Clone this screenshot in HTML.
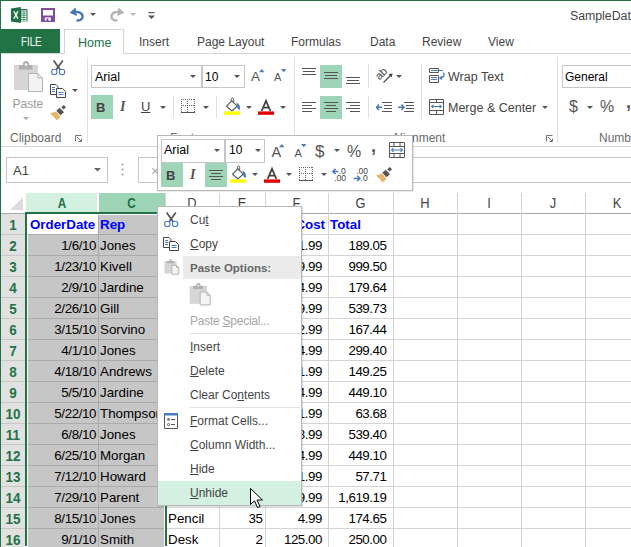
<!DOCTYPE html><html><head><meta charset="utf-8"><style>
*{margin:0;padding:0;box-sizing:border-box}
html,body{width:631px;height:547px;overflow:hidden;background:#fff;font-family:"Liberation Sans", sans-serif;position:relative}
.a{position:absolute}
.t{position:absolute;white-space:nowrap;line-height:1}
.cell{position:absolute;white-space:nowrap;font-size:13.33px;line-height:21px;height:21px;color:#000;overflow:visible}
.r{text-align:right}
.mi{position:absolute;left:190px;font-size:12px;color:#505050;white-space:nowrap;line-height:1}
.u{text-decoration:underline;text-underline-offset:1px}
</style></head><body>
<div class="a" style="left:0;top:0;width:631px;height:1px;background:#217346"></div>
<div class="a" style="left:0;top:0;width:1px;height:547px;background:#217346"></div>
<svg class="a" style="left:11px;top:7px" width="17" height="16" viewBox="0 0 17 16">
<rect x="9" y="2" width="7.5" height="12.5" fill="#217346"/>
<rect x="10.3" y="3.20" width="2.3" height="1.35" fill="#fff"/><rect x="13.3" y="3.20" width="2.3" height="1.35" fill="#fff"/><rect x="10.3" y="5.15" width="2.3" height="1.35" fill="#fff"/><rect x="13.3" y="5.15" width="2.3" height="1.35" fill="#fff"/><rect x="10.3" y="7.10" width="2.3" height="1.35" fill="#fff"/><rect x="13.3" y="7.10" width="2.3" height="1.35" fill="#fff"/><rect x="10.3" y="9.05" width="2.3" height="1.35" fill="#fff"/><rect x="13.3" y="9.05" width="2.3" height="1.35" fill="#fff"/><rect x="10.3" y="11.00" width="2.3" height="1.35" fill="#fff"/><rect x="13.3" y="11.00" width="2.3" height="1.35" fill="#fff"/><rect x="10.3" y="12.95" width="2.3" height="1.35" fill="#fff"/><rect x="13.3" y="12.95" width="2.3" height="1.35" fill="#fff"/>
<path d="M0 1.6 L9.8 0 V16 L0 14.4Z" fill="#1e7145"/>
<path d="M2.2 4.3 L4.1 8 L2.2 11.7 H3.7 L4.9 9.3 L6.1 11.7 H7.6 L5.7 8 L7.6 4.3 H6.1 L4.9 6.7 L3.7 4.3Z" fill="#fff"/>
</svg>
<svg class="a" style="left:41px;top:8px" width="14" height="14" viewBox="0 0 14 14">
<path d="M0 0H14V14H0Z" fill="#7e4ea0"/>
<rect x="2" y="2" width="10" height="5.5" fill="#fff"/>
<rect x="3.8" y="9.5" width="6" height="3.2" fill="#fff"/>
<rect x="5.4" y="10.5" width="2" height="3.5" fill="#7e4ea0"/>
</svg>
<svg class="a" style="left:69px;top:6px" width="16" height="16" viewBox="0 0 16 16">
<path d="M5 6.5C9 4.8 13.5 7 13.6 10.5C13.6 13.5 10.5 15 7.5 14.2" fill="none" stroke="#4478b8" stroke-width="2.4"/>
<path d="M0.6 6.8L6.6 1.6L7.8 10Z" fill="#4478b8"/>
</svg>
<svg class="a" style="left:90px;top:13px" width="6" height="4"><path d="M0 0H6L3 3Z" fill="#555"/></svg>
<svg class="a" style="left:109px;top:6px" width="16" height="16" viewBox="0 0 16 16">
<path d="M11 6.5C7 4.8 2.5 7 2.4 10.5C2.4 13.5 5.5 15 8.5 14.2" fill="none" stroke="#b4b4b4" stroke-width="2.4"/>
<path d="M15.4 6.8L9.4 1.6L8.2 10Z" fill="#b4b4b4"/>
</svg>
<svg class="a" style="left:130px;top:13px" width="6" height="4"><path d="M0 0H6L3 3Z" fill="#b4b4b4"/></svg>
<svg class="a" style="left:148px;top:12px" width="7" height="8"><rect x="0.5" y="0" width="6" height="1.2" fill="#555"/><path d="M0 3.5H7L3.5 7Z" fill="#555"/></svg>
<div class="t" style="left:570px;top:10px;font-size:12.3px;color:#444">SampleData.xlsx - Excel</div>
<div class="a" style="left:1px;top:29px;width:59px;height:24px;background:#217346"></div>
<div class="t" style="left:20.5px;top:36px;font-size:12.5px;color:#fff;transform:scaleX(0.78);transform-origin:0 0">FILE</div>
<div class="a" style="left:64px;top:29px;width:60px;height:25px;border:1px solid #d4d4d4;border-bottom:none;background:#fff;z-index:2"></div>
<div class="t" style="left:78px;top:37px;font-size:12.5px;color:#217346;z-index:3">Home</div>
<div class="a" style="left:1px;top:53px;width:630px;height:1px;background:#d4d4d4"></div>
<div class="t" style="left:139px;top:36px;font-size:12px;color:#444">Insert</div>
<div class="t" style="left:197px;top:36px;font-size:12px;color:#444">Page Layout</div>
<div class="t" style="left:291px;top:36px;font-size:12px;color:#444">Formulas</div>
<div class="t" style="left:370px;top:36px;font-size:12px;color:#444">Data</div>
<div class="t" style="left:422px;top:36px;font-size:12px;color:#444">Review</div>
<div class="t" style="left:488px;top:36px;font-size:12px;color:#444">View</div>
<div class="a" style="left:1px;top:146px;width:630px;height:1px;background:#d4d4d4"></div>
<div class="a" style="left:87px;top:57px;width:1px;height:86px;background:#e1e1e1"></div>
<div class="a" style="left:294px;top:57px;width:1px;height:86px;background:#e1e1e1"></div>
<div class="a" style="left:557px;top:57px;width:1px;height:86px;background:#e1e1e1"></div>
<div class="t" style="left:10px;top:132px;font-size:12px;color:#6a6a6a">Clipboard</div>
<div class="t" style="left:170px;top:132px;font-size:12px;color:#6a6a6a">Font</div>
<div class="t" style="left:392px;top:132px;font-size:12px;color:#6a6a6a">Alignment</div>
<div class="t" style="left:599px;top:132px;font-size:12px;color:#6a6a6a">Number</div>
<svg class="a" style="left:75px;top:135px" width="7" height="7"><path d="M0.5 6.5V0.5H6.5" fill="none" stroke="#777" stroke-width="1"/><path d="M2 2L6 6M3.5 6.5H6.5V3.5" fill="none" stroke="#777" stroke-width="1"/></svg>
<svg class="a" style="left:546px;top:135px" width="7" height="7"><path d="M0.5 6.5V0.5H6.5" fill="none" stroke="#777" stroke-width="1"/><path d="M2 2L6 6M3.5 6.5H6.5V3.5" fill="none" stroke="#777" stroke-width="1"/></svg>
<svg class="a" style="left:13px;top:61px" width="31" height="32" viewBox="0 0 31 32">
<rect x="1" y="4" width="24" height="25" fill="#d6d6d6"/>
<rect x="6" y="4" width="13.5" height="4.5" fill="#b0b0b0"/>
<circle cx="13" cy="3" r="3" fill="#b0b0b0"/>
<circle cx="13" cy="3.5" r="1.2" fill="#fff"/>
<path d="M15.5 12.5H25L29.5 17V30.5H15.5Z" fill="#f5f2f5" stroke="#b4b4b4" stroke-width="1"/>
<path d="M25 12.5V17H29.5" fill="none" stroke="#b4b4b4"/>
</svg>
<div class="t" style="left:12.5px;top:98px;font-size:12px;color:#9a9a9a">Paste</div>
<svg class="a" style="left:23px;top:117px" width="6" height="4"><path d="M0 0H6L3 3Z" fill="#aaa"/></svg>
<svg class="a" style="left:51px;top:60px" width="15" height="16" viewBox="0 0 15 16">
<path d="M2.6 0.5L9.6 10.3M11.8 0.5L4.8 10.3" stroke="#555" stroke-width="1.7"/>
<circle cx="3.3" cy="12" r="2.7" fill="#fff" stroke="#4a7cbf" stroke-width="1.1"/>
<circle cx="11.1" cy="12" r="2.7" fill="#fff" stroke="#4a7cbf" stroke-width="1.1"/>
</svg>
<svg class="a" style="left:50px;top:84px" width="16" height="14" viewBox="0 0 16 14">
<path d="M0.5 0.5H6L8 2.5V10.5H0.5Z" fill="#fff" stroke="#444"/>
<path d="M6.5 4.5H12.5L15.5 7.5V13.5H6.5Z" fill="#fff" stroke="#444"/>
<path d="M2 3.5H5M2 5.5H5M2 7.5H5M8.5 8.5H13.5M8.5 10.5H13.5" stroke="#4a7cbf" stroke-width="1"/>
</svg>
<svg class="a" style="left:72px;top:89px" width="6" height="4"><path d="M0 0H6L3 3Z" fill="#555"/></svg>
<svg class="a" style="left:46px;top:100px" width="24" height="24" viewBox="0 0 24 24">
<path d="M4 13.5L10 11.5L14.5 17L10.5 20.5Q7.5 16 4 13.5Z" fill="#e6b46a"/>
<path d="M10.3 10.8L13.8 7.8L18 12.3L14.5 15.3Z" fill="#555"/>
<path d="M15.3 7.3L17.8 5L20 7.3L17.5 9.6Z" fill="#555"/>
</svg>
<div class="a" style="left:91px;top:65px;width:111px;height:23px;border:1px solid #c6c6c6"></div>
<div class="t" style="left:95px;top:71px;font-size:12.5px;color:#000">Arial</div>
<svg class="a" style="left:190px;top:75px" width="6" height="4"><path d="M0 0H6L3 3Z" fill="#555"/></svg>
<div class="a" style="left:202px;top:65px;width:43px;height:23px;border:1px solid #c6c6c6"></div>
<div class="t" style="left:205px;top:71px;font-size:12px;color:#000">10</div>
<svg class="a" style="left:234px;top:75px" width="6" height="4"><path d="M0 0H6L3 3Z" fill="#555"/></svg>
<div class="t" style="left:251px;top:70px;font-size:13.5px;color:#555">A</div>
<svg class="a" style="left:258.5px;top:68.5px" width="6" height="4"><path d="M0 3.2H5.5L2.75 0Z" fill="#4a7cbf"/></svg>
<div class="t" style="left:274px;top:72px;font-size:11px;color:#555">A</div>
<svg class="a" style="left:281px;top:68.5px" width="6" height="4"><path d="M0 0H5.5L2.75 3.2Z" fill="#4a7cbf"/></svg>
<div class="a" style="left:91px;top:95px;width:22px;height:24px;background:#9fd5b7"></div>
<div class="t" style="left:96px;top:101px;font-size:13px;font-weight:bold;color:#444">B</div>
<div class="t" style="left:120px;top:100px;font-size:14px;font-weight:bold;font-style:italic;font-family:'Liberation Serif',serif;color:#555">I</div>
<div class="t" style="left:141px;top:100px;font-size:13px;color:#444;text-decoration:underline">U</div>
<svg class="a" style="left:160px;top:106px" width="6" height="4"><path d="M0 0H6L3 3Z" fill="#555"/></svg>
<div class="a" style="left:173px;top:96px;width:1px;height:22px;background:#e1e1e1"></div>
<svg class="a" style="left:181px;top:99px" width="14" height="15" viewBox="0 0 14 15">
<path d="M0.5 0V13M13.5 0V13M6.5 0V13M0 0.5H14M0 6.5H14" fill="none" stroke="#666" stroke-width="1" stroke-dasharray="1 1"/>
<path d="M0 13.5H14" stroke="#555" stroke-width="1"/>
</svg>
<svg class="a" style="left:203px;top:106px" width="6" height="4"><path d="M0 0H6L3 3Z" fill="#555"/></svg>
<div class="a" style="left:216px;top:96px;width:1px;height:22px;background:#e1e1e1"></div>
<svg class="a" style="left:223px;top:97px" width="18" height="18" viewBox="0 0 18 18">
<path d="M8.3 6.5V2.6Q8.3 1 9.5 1Q10.7 1 10.7 2.6V5" fill="none" stroke="#555" stroke-width="1"/>
<path d="M3.6 9.2L8.9 3.9L14.2 9.2L8.9 14Z" fill="#fff" stroke="#555" stroke-width="1.1"/>
<path d="M13.6 5.6Q17.6 7.6 17 12.8Q14.6 12.8 13.9 9.6Z" fill="#4a7cbf"/>
<rect x="1" y="14.4" width="16" height="3.4" fill="#ffff00"/>
</svg>
<svg class="a" style="left:246px;top:106px" width="6" height="4"><path d="M0 0H6L3 3Z" fill="#555"/></svg>
<svg class="a" style="left:258px;top:97px" width="16" height="18" viewBox="0 0 16 18">
<path d="M3.6 14L8 3.8L12.4 14M5.2 10.6H10.8" fill="none" stroke="#444" stroke-width="1.8"/>
<rect x="0" y="14.4" width="16" height="3.4" fill="#e00000"/>
</svg>
<svg class="a" style="left:280px;top:106px" width="6" height="4"><path d="M0 0H6L3 3Z" fill="#555"/></svg>
<svg class="a" style="left:302px;top:68px" width="14" height="10"><rect x="0.0" y="0" width="14" height="1" fill="#555"/><rect x="1.0" y="3" width="12" height="1" fill="#555"/><rect x="0.0" y="6" width="14" height="1" fill="#555"/></svg>
<div class="a" style="left:320px;top:65px;width:22px;height:23px;background:#9fd5b7"></div>
<svg class="a" style="left:324px;top:72px" width="14" height="10"><rect x="0.0" y="0" width="14" height="1" fill="#555"/><rect x="1.0" y="3" width="12" height="1" fill="#555"/><rect x="0.0" y="6" width="14" height="1" fill="#555"/></svg>
<svg class="a" style="left:346px;top:77px" width="14" height="10"><rect x="0.0" y="0" width="14" height="1" fill="#555"/><rect x="1.0" y="3" width="12" height="1" fill="#555"/><rect x="0.0" y="6" width="14" height="1" fill="#555"/></svg>
<svg class="a" style="left:302px;top:102px" width="14" height="13"><rect x="0" y="0" width="14" height="1" fill="#555"/><rect x="0" y="3" width="10" height="1" fill="#555"/><rect x="0" y="6" width="14" height="1" fill="#555"/><rect x="0" y="9" width="10" height="1" fill="#555"/></svg>
<div class="a" style="left:320px;top:96px;width:22px;height:23px;background:#9fd5b7"></div>
<svg class="a" style="left:324px;top:102px" width="14" height="13"><rect x="0.0" y="0" width="14" height="1" fill="#555"/><rect x="2.0" y="3" width="10" height="1" fill="#555"/><rect x="0.0" y="6" width="14" height="1" fill="#555"/><rect x="2.0" y="9" width="10" height="1" fill="#555"/></svg>
<svg class="a" style="left:346px;top:102px" width="14" height="13"><rect x="0" y="0" width="14" height="1" fill="#555"/><rect x="4" y="3" width="10" height="1" fill="#555"/><rect x="0" y="6" width="14" height="1" fill="#555"/><rect x="4" y="9" width="10" height="1" fill="#555"/></svg>
<div class="a" style="left:368px;top:64px;width:1px;height:24px;background:#e1e1e1"></div>
<div class="a" style="left:368px;top:96px;width:1px;height:22px;background:#e1e1e1"></div>
<svg class="a" style="left:375px;top:66px" width="20" height="18" viewBox="0 0 20 18">
<text x="0" y="0" font-size="11" font-family="Liberation Sans" fill="#444" transform="translate(4.5 14.5) rotate(-45)">ab</text>
<path d="M8.5 16.5L16.5 8.5" stroke="#444" stroke-width="1.1"/>
<path d="M17.5 7.5L13.5 8.3L16.7 11.5Z" fill="#444"/>
</svg>
<svg class="a" style="left:396px;top:75px" width="6" height="4"><path d="M0 0H6L3 3Z" fill="#555"/></svg>
<svg class="a" style="left:376px;top:101px" width="16" height="13" viewBox="0 0 16 13">
<path d="M6 1.5H16M8 4.5H16M8 7.5H16M6 10.5H16" stroke="#555" stroke-width="1"/>
<path d="M0 6.3H6M3 3.5L0.5 6.3L3 9" fill="none" stroke="#4a7cbf" stroke-width="1.6"/>
</svg>
<svg class="a" style="left:398px;top:101px" width="16" height="13" viewBox="0 0 16 13">
<path d="M6 1.5H16M8 4.5H16M8 7.5H16M6 10.5H16" stroke="#555" stroke-width="1"/>
<path d="M0 6.3H6M3.5 3.5L6 6.3L3.5 9" fill="none" stroke="#4a7cbf" stroke-width="1.6"/>
</svg>
<div class="a" style="left:421px;top:64px;width:1px;height:55px;background:#e1e1e1"></div>
<svg class="a" style="left:429px;top:67px" width="18" height="17" viewBox="0 0 18 17">
<path d="M0.5 1.5H9.5V5.5H0.5Z" fill="none" stroke="#555"/>
<path d="M2 3.5H14" stroke="#4a7cbf" stroke-width="1"/>
<path d="M0.5 8.5H9.5V15.5H0.5Z" fill="none" stroke="#555"/>
<path d="M2 10.5H8M2 12.5H8" stroke="#4a7cbf" stroke-width="1"/>
<path d="M14.5 5.5Q16.5 9.5 12 11" fill="none" stroke="#4a7cbf" stroke-width="1.3"/>
<path d="M10 11L13 8.5V13.3Z" fill="#4a7cbf"/>
</svg>
<div class="t" style="left:448px;top:71px;font-size:12.5px;color:#444">Wrap Text</div>
<svg class="a" style="left:429px;top:99px" width="15" height="16" viewBox="0 0 15 16">
<path d="M0.5 0.5H14.5V15.5H0.5Z M0.5 3.5H14.5M0.5 11.5H14.5M7.5 0.5V3.5M7.5 11.5V15.5" fill="none" stroke="#555"/>
<path d="M2.5 7.5H12.5M4.5 5.8L2.5 7.5L4.5 9.2M10.5 5.8L12.5 7.5L10.5 9.2" fill="none" stroke="#4a7cbf" stroke-width="1.1"/>
</svg>
<div class="t" style="left:448px;top:102px;font-size:12.5px;color:#444">Merge &amp; Center</div>
<svg class="a" style="left:542px;top:106px" width="6" height="4"><path d="M0 0H6L3 3Z" fill="#555"/></svg>
<div class="a" style="left:562px;top:65px;width:80px;height:23px;border:1px solid #c6c6c6"></div>
<div class="t" style="left:565px;top:71px;font-size:12px;color:#000">General</div>
<div class="t" style="left:569px;top:99px;font-size:16px;color:#555">$</div>
<svg class="a" style="left:587px;top:106px" width="6" height="4"><path d="M0 0H6L3 3Z" fill="#555"/></svg>
<div class="t" style="left:600px;top:99px;font-size:16px;color:#555">%</div>
<div class="t" style="left:626px;top:93px;font-size:18px;font-weight:bold;color:#555">,</div>
<div class="a" style="left:6px;top:157px;width:102px;height:26px;border:1px solid #c6c6c6;background:#fff"></div>
<div class="t" style="left:13px;top:164px;font-size:13px;color:#444">A1</div>
<svg class="a" style="left:94px;top:168px" width="7" height="4"><path d="M0 0H7L3.5 3.5Z" fill="#666"/></svg>
<svg class="a" style="left:121px;top:163px" width="3" height="13"><circle cx="1.5" cy="1.5" r="1" fill="#999"/><circle cx="1.5" cy="6.5" r="1" fill="#999"/><circle cx="1.5" cy="11.5" r="1" fill="#999"/></svg>
<div class="a" style="left:138px;top:157px;width:500px;height:26px;border:1px solid #c6c6c6;background:#fff"></div>
<div class="t" style="left:151px;top:164px;font-size:14px;color:#aaa">×</div>
<div class="a" style="left:1px;top:213px;width:630px;height:1px;background:#ababab"></div>
<div class="a" style="left:26px;top:193px;width:72px;height:20px;background:#d3f0e0"></div>
<div class="t" style="left:26px;top:196px;width:72px;text-align:center;font-size:14.67px;color:#217346;font-weight:bold;transform:scaleX(0.8);">A</div>
<div class="a" style="left:98px;top:193px;width:67px;height:20px;background:#9fd5b7"></div>
<div class="t" style="left:98px;top:196px;width:67px;text-align:center;font-size:14.67px;color:#217346;font-weight:bold;transform:scaleX(0.8);">C</div>
<div class="a" style="left:98px;top:193px;width:1px;height:20px;background:#d4d4d4"></div>
<div class="a" style="left:165px;top:193px;width:54px;height:20px;background:#fff"></div>
<div class="t" style="left:165px;top:196px;width:54px;text-align:center;font-size:14.67px;color:#444;transform:scaleX(0.88);">D</div>
<div class="a" style="left:165px;top:193px;width:1px;height:20px;background:#d4d4d4"></div>
<div class="a" style="left:219px;top:193px;width:46px;height:20px;background:#fff"></div>
<div class="t" style="left:219px;top:196px;width:46px;text-align:center;font-size:14.67px;color:#444;transform:scaleX(0.88);">E</div>
<div class="a" style="left:219px;top:193px;width:1px;height:20px;background:#d4d4d4"></div>
<div class="a" style="left:265px;top:193px;width:63px;height:20px;background:#fff"></div>
<div class="t" style="left:265px;top:196px;width:63px;text-align:center;font-size:14.67px;color:#444;transform:scaleX(0.88);">F</div>
<div class="a" style="left:265px;top:193px;width:1px;height:20px;background:#d4d4d4"></div>
<div class="a" style="left:328px;top:193px;width:65px;height:20px;background:#fff"></div>
<div class="t" style="left:328px;top:196px;width:65px;text-align:center;font-size:14.67px;color:#444;transform:scaleX(0.88);">G</div>
<div class="a" style="left:328px;top:193px;width:1px;height:20px;background:#d4d4d4"></div>
<div class="a" style="left:393px;top:193px;width:64px;height:20px;background:#fff"></div>
<div class="t" style="left:393px;top:196px;width:64px;text-align:center;font-size:14.67px;color:#444;transform:scaleX(0.88);">H</div>
<div class="a" style="left:393px;top:193px;width:1px;height:20px;background:#d4d4d4"></div>
<div class="a" style="left:457px;top:193px;width:64px;height:20px;background:#fff"></div>
<div class="t" style="left:457px;top:196px;width:64px;text-align:center;font-size:14.67px;color:#444;transform:scaleX(0.88);">I</div>
<div class="a" style="left:457px;top:193px;width:1px;height:20px;background:#d4d4d4"></div>
<div class="a" style="left:521px;top:193px;width:64px;height:20px;background:#fff"></div>
<div class="t" style="left:521px;top:196px;width:64px;text-align:center;font-size:14.67px;color:#444;transform:scaleX(0.88);">J</div>
<div class="a" style="left:521px;top:193px;width:1px;height:20px;background:#d4d4d4"></div>
<div class="a" style="left:585px;top:193px;width:64px;height:20px;background:#fff"></div>
<div class="t" style="left:585px;top:196px;width:64px;text-align:center;font-size:14.67px;color:#444;transform:scaleX(0.88);">K</div>
<div class="a" style="left:585px;top:193px;width:1px;height:20px;background:#d4d4d4"></div>
<svg class="a" style="left:10px;top:197px" width="14" height="14"><path d="M13 0V13H0Z" fill="#dcdcdc"/></svg>
<div class="a" style="left:25px;top:212px;width:142px;height:2px;background:#217346"></div>
<div class="a" style="left:1px;top:214px;width:24px;height:334px;background:#e1e1e1"></div>
<div class="a" style="left:27px;top:214px;width:138px;height:334px;background:#c6c6c6"></div>
<div class="a" style="left:27px;top:215px;width:71px;height:20px;background:#fff"></div>
<div class="a" style="left:1px;top:234px;width:24px;height:1px;background:#c8c8c8"></div>
<div class="a" style="left:27px;top:234px;width:138px;height:1px;background:#ababab"></div>
<div class="a" style="left:167px;top:234px;width:464px;height:1px;background:#d4d4d4"></div>
<div class="a" style="left:1px;top:255px;width:24px;height:1px;background:#c8c8c8"></div>
<div class="a" style="left:27px;top:255px;width:138px;height:1px;background:#ababab"></div>
<div class="a" style="left:167px;top:255px;width:464px;height:1px;background:#d4d4d4"></div>
<div class="a" style="left:1px;top:276px;width:24px;height:1px;background:#c8c8c8"></div>
<div class="a" style="left:27px;top:276px;width:138px;height:1px;background:#ababab"></div>
<div class="a" style="left:167px;top:276px;width:464px;height:1px;background:#d4d4d4"></div>
<div class="a" style="left:1px;top:297px;width:24px;height:1px;background:#c8c8c8"></div>
<div class="a" style="left:27px;top:297px;width:138px;height:1px;background:#ababab"></div>
<div class="a" style="left:167px;top:297px;width:464px;height:1px;background:#d4d4d4"></div>
<div class="a" style="left:1px;top:318px;width:24px;height:1px;background:#c8c8c8"></div>
<div class="a" style="left:27px;top:318px;width:138px;height:1px;background:#ababab"></div>
<div class="a" style="left:167px;top:318px;width:464px;height:1px;background:#d4d4d4"></div>
<div class="a" style="left:1px;top:339px;width:24px;height:1px;background:#c8c8c8"></div>
<div class="a" style="left:27px;top:339px;width:138px;height:1px;background:#ababab"></div>
<div class="a" style="left:167px;top:339px;width:464px;height:1px;background:#d4d4d4"></div>
<div class="a" style="left:1px;top:360px;width:24px;height:1px;background:#c8c8c8"></div>
<div class="a" style="left:27px;top:360px;width:138px;height:1px;background:#ababab"></div>
<div class="a" style="left:167px;top:360px;width:464px;height:1px;background:#d4d4d4"></div>
<div class="a" style="left:1px;top:381px;width:24px;height:1px;background:#c8c8c8"></div>
<div class="a" style="left:27px;top:381px;width:138px;height:1px;background:#ababab"></div>
<div class="a" style="left:167px;top:381px;width:464px;height:1px;background:#d4d4d4"></div>
<div class="a" style="left:1px;top:402px;width:24px;height:1px;background:#c8c8c8"></div>
<div class="a" style="left:27px;top:402px;width:138px;height:1px;background:#ababab"></div>
<div class="a" style="left:167px;top:402px;width:464px;height:1px;background:#d4d4d4"></div>
<div class="a" style="left:1px;top:423px;width:24px;height:1px;background:#c8c8c8"></div>
<div class="a" style="left:27px;top:423px;width:138px;height:1px;background:#ababab"></div>
<div class="a" style="left:167px;top:423px;width:464px;height:1px;background:#d4d4d4"></div>
<div class="a" style="left:1px;top:444px;width:24px;height:1px;background:#c8c8c8"></div>
<div class="a" style="left:27px;top:444px;width:138px;height:1px;background:#ababab"></div>
<div class="a" style="left:167px;top:444px;width:464px;height:1px;background:#d4d4d4"></div>
<div class="a" style="left:1px;top:465px;width:24px;height:1px;background:#c8c8c8"></div>
<div class="a" style="left:27px;top:465px;width:138px;height:1px;background:#ababab"></div>
<div class="a" style="left:167px;top:465px;width:464px;height:1px;background:#d4d4d4"></div>
<div class="a" style="left:1px;top:486px;width:24px;height:1px;background:#c8c8c8"></div>
<div class="a" style="left:27px;top:486px;width:138px;height:1px;background:#ababab"></div>
<div class="a" style="left:167px;top:486px;width:464px;height:1px;background:#d4d4d4"></div>
<div class="a" style="left:1px;top:507px;width:24px;height:1px;background:#c8c8c8"></div>
<div class="a" style="left:27px;top:507px;width:138px;height:1px;background:#ababab"></div>
<div class="a" style="left:167px;top:507px;width:464px;height:1px;background:#d4d4d4"></div>
<div class="a" style="left:1px;top:528px;width:24px;height:1px;background:#c8c8c8"></div>
<div class="a" style="left:27px;top:528px;width:138px;height:1px;background:#ababab"></div>
<div class="a" style="left:167px;top:528px;width:464px;height:1px;background:#d4d4d4"></div>
<div class="a" style="left:1px;top:549px;width:24px;height:1px;background:#c8c8c8"></div>
<div class="a" style="left:27px;top:549px;width:138px;height:1px;background:#ababab"></div>
<div class="a" style="left:167px;top:549px;width:464px;height:1px;background:#d4d4d4"></div>
<div class="a" style="left:98px;top:215px;width:1px;height:334px;background:#ababab"></div>
<div class="a" style="left:96px;top:193px;width:1px;height:19px;background:#e3e3e3"></div>
<div class="a" style="left:97px;top:193px;width:2px;height:19px;background:#fbfbfb"></div>
<div class="a" style="left:219px;top:213px;width:1px;height:334px;background:#d4d4d4"></div>
<div class="a" style="left:265px;top:213px;width:1px;height:334px;background:#d4d4d4"></div>
<div class="a" style="left:328px;top:213px;width:1px;height:334px;background:#d4d4d4"></div>
<div class="a" style="left:393px;top:213px;width:1px;height:334px;background:#d4d4d4"></div>
<div class="a" style="left:457px;top:213px;width:1px;height:334px;background:#d4d4d4"></div>
<div class="a" style="left:521px;top:213px;width:1px;height:334px;background:#d4d4d4"></div>
<div class="a" style="left:585px;top:213px;width:1px;height:334px;background:#d4d4d4"></div>
<div class="a" style="left:27px;top:214px;width:1px;height:334px;background:#fff"></div>
<div class="a" style="left:164px;top:214px;width:1px;height:334px;background:#fff"></div>
<div class="a" style="left:27px;top:214px;width:138px;height:1px;background:#fff"></div>
<div class="a" style="left:25px;top:212px;width:2px;height:334px;background:#217346"></div>
<div class="a" style="left:165px;top:212px;width:2px;height:334px;background:#217346"></div>
<div class="t" style="left:1px;top:217px;width:24px;text-align:center;font-size:15.5px;font-weight:bold;color:#217346;transform:scaleX(0.87)">1</div>
<div class="cell" style="left:30px;top:214px;font-weight:bold;color:#0000ff;">OrderDate</div>
<div class="cell" style="left:100px;top:214px;font-weight:bold;color:#0000ff;">Rep</div>
<div class="cell" style="left:168px;top:214px;font-weight:bold;color:#0000ff;">Item</div>
<div class="cell" style="left:221px;top:214px;font-weight:bold;color:#0000ff;">Units</div>
<div class="cell r" style="left:265px;width:60px;top:214px;font-weight:bold;color:#0000ff;">Cost</div>
<div class="cell" style="left:330px;top:214px;font-weight:bold;color:#0000ff;">Total</div>
<div class="t" style="left:1px;top:238px;width:24px;text-align:center;font-size:15.5px;font-weight:bold;color:#217346;transform:scaleX(0.87)">2</div>
<div class="cell r" style="left:27px;width:69px;top:235px;letter-spacing:-0.4px">1/6/10</div>
<div class="cell" style="left:100px;top:235px">Jones</div>
<div class="cell" style="left:168px;top:235px">Pencil</div>
<div class="cell r" style="left:219px;width:43.5px;top:235px;letter-spacing:-0.45px">95</div>
<div class="cell r" style="left:265px;width:57px;top:235px;letter-spacing:-0.45px">1.99</div>
<div class="cell r" style="left:328px;width:58.5px;top:235px;letter-spacing:-0.45px">189.05</div>
<div class="t" style="left:1px;top:259px;width:24px;text-align:center;font-size:15.5px;font-weight:bold;color:#217346;transform:scaleX(0.87)">3</div>
<div class="cell r" style="left:27px;width:69px;top:256px;letter-spacing:-0.4px">1/23/10</div>
<div class="cell" style="left:100px;top:256px">Kivell</div>
<div class="cell" style="left:168px;top:256px">Binder</div>
<div class="cell r" style="left:219px;width:43.5px;top:256px;letter-spacing:-0.45px">50</div>
<div class="cell r" style="left:265px;width:57px;top:256px;letter-spacing:-0.45px">19.99</div>
<div class="cell r" style="left:328px;width:58.5px;top:256px;letter-spacing:-0.45px">999.50</div>
<div class="t" style="left:1px;top:280px;width:24px;text-align:center;font-size:15.5px;font-weight:bold;color:#217346;transform:scaleX(0.87)">4</div>
<div class="cell r" style="left:27px;width:69px;top:277px;letter-spacing:-0.4px">2/9/10</div>
<div class="cell" style="left:100px;top:277px">Jardine</div>
<div class="cell" style="left:168px;top:277px">Pencil</div>
<div class="cell r" style="left:219px;width:43.5px;top:277px;letter-spacing:-0.45px">36</div>
<div class="cell r" style="left:265px;width:57px;top:277px;letter-spacing:-0.45px">4.99</div>
<div class="cell r" style="left:328px;width:58.5px;top:277px;letter-spacing:-0.45px">179.64</div>
<div class="t" style="left:1px;top:301px;width:24px;text-align:center;font-size:15.5px;font-weight:bold;color:#217346;transform:scaleX(0.87)">5</div>
<div class="cell r" style="left:27px;width:69px;top:298px;letter-spacing:-0.4px">2/26/10</div>
<div class="cell" style="left:100px;top:298px">Gill</div>
<div class="cell" style="left:168px;top:298px">Pen</div>
<div class="cell r" style="left:219px;width:43.5px;top:298px;letter-spacing:-0.45px">27</div>
<div class="cell r" style="left:265px;width:57px;top:298px;letter-spacing:-0.45px">19.99</div>
<div class="cell r" style="left:328px;width:58.5px;top:298px;letter-spacing:-0.45px">539.73</div>
<div class="t" style="left:1px;top:322px;width:24px;text-align:center;font-size:15.5px;font-weight:bold;color:#217346;transform:scaleX(0.87)">6</div>
<div class="cell r" style="left:27px;width:69px;top:319px;letter-spacing:-0.4px">3/15/10</div>
<div class="cell" style="left:100px;top:319px">Sorvino</div>
<div class="cell" style="left:168px;top:319px">Pencil</div>
<div class="cell r" style="left:219px;width:43.5px;top:319px;letter-spacing:-0.45px">56</div>
<div class="cell r" style="left:265px;width:57px;top:319px;letter-spacing:-0.45px">2.99</div>
<div class="cell r" style="left:328px;width:58.5px;top:319px;letter-spacing:-0.45px">167.44</div>
<div class="t" style="left:1px;top:343px;width:24px;text-align:center;font-size:15.5px;font-weight:bold;color:#217346;transform:scaleX(0.87)">7</div>
<div class="cell r" style="left:27px;width:69px;top:340px;letter-spacing:-0.4px">4/1/10</div>
<div class="cell" style="left:100px;top:340px">Jones</div>
<div class="cell" style="left:168px;top:340px">Binder</div>
<div class="cell r" style="left:219px;width:43.5px;top:340px;letter-spacing:-0.45px">60</div>
<div class="cell r" style="left:265px;width:57px;top:340px;letter-spacing:-0.45px">4.99</div>
<div class="cell r" style="left:328px;width:58.5px;top:340px;letter-spacing:-0.45px">299.40</div>
<div class="t" style="left:1px;top:364px;width:24px;text-align:center;font-size:15.5px;font-weight:bold;color:#217346;transform:scaleX(0.87)">8</div>
<div class="cell r" style="left:27px;width:69px;top:361px;letter-spacing:-0.4px">4/18/10</div>
<div class="cell" style="left:100px;top:361px">Andrews</div>
<div class="cell" style="left:168px;top:361px">Pencil</div>
<div class="cell r" style="left:219px;width:43.5px;top:361px;letter-spacing:-0.45px">75</div>
<div class="cell r" style="left:265px;width:57px;top:361px;letter-spacing:-0.45px">1.99</div>
<div class="cell r" style="left:328px;width:58.5px;top:361px;letter-spacing:-0.45px">149.25</div>
<div class="t" style="left:1px;top:385px;width:24px;text-align:center;font-size:15.5px;font-weight:bold;color:#217346;transform:scaleX(0.87)">9</div>
<div class="cell r" style="left:27px;width:69px;top:382px;letter-spacing:-0.4px">5/5/10</div>
<div class="cell" style="left:100px;top:382px">Jardine</div>
<div class="cell" style="left:168px;top:382px">Pencil</div>
<div class="cell r" style="left:219px;width:43.5px;top:382px;letter-spacing:-0.45px">90</div>
<div class="cell r" style="left:265px;width:57px;top:382px;letter-spacing:-0.45px">4.99</div>
<div class="cell r" style="left:328px;width:58.5px;top:382px;letter-spacing:-0.45px">449.10</div>
<div class="t" style="left:1px;top:406px;width:24px;text-align:center;font-size:15.5px;font-weight:bold;color:#217346;transform:scaleX(0.87)">10</div>
<div class="cell r" style="left:27px;width:69px;top:403px;letter-spacing:-0.4px">5/22/10</div>
<div class="cell" style="left:100px;top:403px">Thompson</div>
<div class="cell" style="left:168px;top:403px">Pencil</div>
<div class="cell r" style="left:219px;width:43.5px;top:403px;letter-spacing:-0.45px">32</div>
<div class="cell r" style="left:265px;width:57px;top:403px;letter-spacing:-0.45px">1.99</div>
<div class="cell r" style="left:328px;width:58.5px;top:403px;letter-spacing:-0.45px">63.68</div>
<div class="t" style="left:1px;top:427px;width:24px;text-align:center;font-size:15.5px;font-weight:bold;color:#217346;transform:scaleX(0.87)">11</div>
<div class="cell r" style="left:27px;width:69px;top:424px;letter-spacing:-0.4px">6/8/10</div>
<div class="cell" style="left:100px;top:424px">Jones</div>
<div class="cell" style="left:168px;top:424px">Binder</div>
<div class="cell r" style="left:219px;width:43.5px;top:424px;letter-spacing:-0.45px">60</div>
<div class="cell r" style="left:265px;width:57px;top:424px;letter-spacing:-0.45px">8.99</div>
<div class="cell r" style="left:328px;width:58.5px;top:424px;letter-spacing:-0.45px">539.40</div>
<div class="t" style="left:1px;top:448px;width:24px;text-align:center;font-size:15.5px;font-weight:bold;color:#217346;transform:scaleX(0.87)">12</div>
<div class="cell r" style="left:27px;width:69px;top:445px;letter-spacing:-0.4px">6/25/10</div>
<div class="cell" style="left:100px;top:445px">Morgan</div>
<div class="cell" style="left:168px;top:445px">Pencil</div>
<div class="cell r" style="left:219px;width:43.5px;top:445px;letter-spacing:-0.45px">90</div>
<div class="cell r" style="left:265px;width:57px;top:445px;letter-spacing:-0.45px">4.99</div>
<div class="cell r" style="left:328px;width:58.5px;top:445px;letter-spacing:-0.45px">449.10</div>
<div class="t" style="left:1px;top:469px;width:24px;text-align:center;font-size:15.5px;font-weight:bold;color:#217346;transform:scaleX(0.87)">13</div>
<div class="cell r" style="left:27px;width:69px;top:466px;letter-spacing:-0.4px">7/12/10</div>
<div class="cell" style="left:100px;top:466px">Howard</div>
<div class="cell" style="left:168px;top:466px">Binder</div>
<div class="cell r" style="left:219px;width:43.5px;top:466px;letter-spacing:-0.45px">29</div>
<div class="cell r" style="left:265px;width:57px;top:466px;letter-spacing:-0.45px">1.99</div>
<div class="cell r" style="left:328px;width:58.5px;top:466px;letter-spacing:-0.45px">57.71</div>
<div class="t" style="left:1px;top:490px;width:24px;text-align:center;font-size:15.5px;font-weight:bold;color:#217346;transform:scaleX(0.87)">14</div>
<div class="cell r" style="left:27px;width:69px;top:487px;letter-spacing:-0.4px">7/29/10</div>
<div class="cell" style="left:100px;top:487px">Parent</div>
<div class="cell" style="left:168px;top:487px">Binder</div>
<div class="cell r" style="left:219px;width:43.5px;top:487px;letter-spacing:-0.45px">81</div>
<div class="cell r" style="left:265px;width:57px;top:487px;letter-spacing:-0.45px">19.99</div>
<div class="cell r" style="left:328px;width:58.5px;top:487px;letter-spacing:-0.45px">1,619.19</div>
<div class="t" style="left:1px;top:511px;width:24px;text-align:center;font-size:15.5px;font-weight:bold;color:#217346;transform:scaleX(0.87)">15</div>
<div class="cell r" style="left:27px;width:69px;top:508px;letter-spacing:-0.4px">8/15/10</div>
<div class="cell" style="left:100px;top:508px">Jones</div>
<div class="cell" style="left:168px;top:508px">Pencil</div>
<div class="cell r" style="left:219px;width:43.5px;top:508px;letter-spacing:-0.45px">35</div>
<div class="cell r" style="left:265px;width:57px;top:508px;letter-spacing:-0.45px">4.99</div>
<div class="cell r" style="left:328px;width:58.5px;top:508px;letter-spacing:-0.45px">174.65</div>
<div class="t" style="left:1px;top:532px;width:24px;text-align:center;font-size:15.5px;font-weight:bold;color:#217346;transform:scaleX(0.87)">16</div>
<div class="cell r" style="left:27px;width:69px;top:529px;letter-spacing:-0.4px">9/1/10</div>
<div class="cell" style="left:100px;top:529px">Smith</div>
<div class="cell" style="left:168px;top:529px">Desk</div>
<div class="cell r" style="left:219px;width:43.5px;top:529px;letter-spacing:-0.45px">2</div>
<div class="cell r" style="left:265px;width:57px;top:529px;letter-spacing:-0.45px">125.00</div>
<div class="cell r" style="left:328px;width:58.5px;top:529px;letter-spacing:-0.45px">250.00</div>
<div class="a" style="left:157px;top:135px;width:256px;height:56px;background:#fff;border:1px solid #b8b8b8;box-shadow:1px 1px 1px rgba(0,0,0,0.08);z-index:10"></div>
<div class="a" style="left:0;top:0;width:631px;height:547px;z-index:11">
<div class="a" style="left:161px;top:139px;width:64px;height:24px;border:1px solid #c6c6c6"></div>
<div class="t" style="left:164px;top:144px;font-size:12.5px;color:#000">Arial</div>
<svg class="a" style="left:214px;top:149px" width="6" height="4"><path d="M0 0H6L3 3Z" fill="#555"/></svg>
<div class="a" style="left:225px;top:139px;width:40px;height:24px;border:1px solid #c6c6c6"></div>
<div class="t" style="left:229px;top:144px;font-size:12px;color:#000">10</div>
<svg class="a" style="left:255px;top:149px" width="6" height="4"><path d="M0 0H6L3 3Z" fill="#555"/></svg>
<div class="t" style="left:271.5px;top:145px;font-size:14.5px;color:#555">A</div>
<svg class="a" style="left:279px;top:143.5px" width="6" height="4"><path d="M0 3.2H5.5L2.75 0Z" fill="#4a7cbf"/></svg>
<div class="t" style="left:294.5px;top:148px;font-size:11px;color:#555">A</div>
<svg class="a" style="left:300.5px;top:143.5px" width="6" height="4"><path d="M0 0H5.5L2.75 3.2Z" fill="#4a7cbf"/></svg>
<div class="t" style="left:315px;top:143px;font-size:17px;color:#555">$</div>
<svg class="a" style="left:334px;top:149px" width="6" height="4"><path d="M0 0H6L3 3Z" fill="#555"/></svg>
<div class="t" style="left:347px;top:144px;font-size:16px;color:#555">%</div>
<div class="t" style="left:371px;top:137px;font-size:18px;font-weight:bold;color:#555">,</div>
<svg class="a" style="left:389px;top:142px" width="16" height="16" viewBox="0 0 16 16">
<path d="M0.5 0.5H15.5V15.5H0.5Z M0.5 4.5H15.5M0.5 11.5H15.5M5 0.5V4.5M11 0.5V4.5M5 11.5V15.5M11 11.5V15.5" fill="none" stroke="#555"/>
<path d="M2.5 8H13.5M4.5 6.2L2.5 8L4.5 9.8M11.5 6.2L13.5 8L11.5 9.8" fill="none" stroke="#4a7cbf" stroke-width="1.1"/>
</svg>
<div class="a" style="left:161px;top:163px;width:22px;height:24px;background:#9fd5b7"></div>
<div class="t" style="left:166px;top:169px;font-size:13px;font-weight:bold;color:#444">B</div>
<div class="t" style="left:190px;top:168px;font-size:14px;font-weight:bold;font-style:italic;font-family:'Liberation Serif',serif;color:#555">I</div>
<div class="a" style="left:205px;top:163px;width:22px;height:24px;background:#9fd5b7"></div>
<svg class="a" style="left:209px;top:170px" width="14" height="13"><rect x="0.0" y="0" width="14" height="1" fill="#555"/><rect x="2.0" y="3" width="10" height="1" fill="#555"/><rect x="0.0" y="6" width="14" height="1" fill="#555"/><rect x="2.0" y="9" width="10" height="1" fill="#555"/></svg>
<svg class="a" style="left:229px;top:165px" width="18" height="18" viewBox="0 0 18 18">
<path d="M8.3 6.5V2.6Q8.3 1 9.5 1Q10.7 1 10.7 2.6V5" fill="none" stroke="#555" stroke-width="1"/>
<path d="M3.6 9.2L8.9 3.9L14.2 9.2L8.9 14Z" fill="#fff" stroke="#555" stroke-width="1.1"/>
<path d="M13.6 5.6Q17.6 7.6 17 12.8Q14.6 12.8 13.9 9.6Z" fill="#4a7cbf"/>
<rect x="1" y="14.4" width="16" height="3.4" fill="#ffff00"/>
</svg>
<svg class="a" style="left:252px;top:173px" width="6" height="4"><path d="M0 0H6L3 3Z" fill="#555"/></svg>
<svg class="a" style="left:264px;top:165px" width="16" height="18" viewBox="0 0 16 18">
<path d="M3.6 14L8 3.8L12.4 14M5.2 10.6H10.8" fill="none" stroke="#444" stroke-width="1.8"/>
<rect x="0" y="14.4" width="16" height="3.4" fill="#e00000"/>
</svg>
<svg class="a" style="left:286px;top:173px" width="6" height="4"><path d="M0 0H6L3 3Z" fill="#555"/></svg>
<svg class="a" style="left:299px;top:167px" width="14" height="15" viewBox="0 0 14 15">
<path d="M0.5 0V13M13.5 0V13M6.5 0V13M0 0.5H14M0 6.5H14" fill="none" stroke="#666" stroke-width="1" stroke-dasharray="1 1"/>
<path d="M0 13.5H14" stroke="#555" stroke-width="1"/>
</svg>
<svg class="a" style="left:321px;top:173px" width="6" height="4"><path d="M0 0H6L3 3Z" fill="#555"/></svg>
<svg class="a" style="left:331px;top:165px" width="17" height="17" viewBox="0 0 17 17">
<path d="M1.8 6.5H7.5M4.6 3.9L1.8 6.5L4.6 9.1" fill="none" stroke="#4a7cbf" stroke-width="1.5"/>
<text x="7.6" y="8.7" font-size="8.6" font-family="Liberation Sans" fill="#444">.0</text>
<text x="3.2" y="15.6" font-size="8.6" font-family="Liberation Sans" fill="#444">.00</text>
</svg>
<svg class="a" style="left:352px;top:165px" width="17" height="17" viewBox="0 0 17 17">
<text x="4.2" y="8.7" font-size="8.6" font-family="Liberation Sans" fill="#444">.00</text>
<path d="M1.5 13.4H8M5.2 10.8L8 13.4L5.2 16" fill="none" stroke="#4a7cbf" stroke-width="1.5"/>
<text x="8.6" y="15.6" font-size="8.6" font-family="Liberation Sans" fill="#444">.0</text>
</svg>
<svg class="a" style="left:372px;top:162px" width="24" height="24" viewBox="0 0 24 24">
<path d="M4 13.5L10 11.5L14.5 17L10.5 20.5Q7.5 16 4 13.5Z" fill="#e6b46a"/>
<path d="M10.3 10.8L13.8 7.8L18 12.3L14.5 15.3Z" fill="#555"/>
<path d="M15.3 7.3L17.8 5L20 7.3L17.5 9.6Z" fill="#555"/>
</svg>
</div>
<div class="a" style="left:157px;top:206px;width:145px;height:300px;background:#fff;border:1px solid #b8b8b8;box-shadow:1px 1px 1px rgba(0,0,0,0.1);z-index:20"></div>
<div class="a" style="left:0;top:0;width:631px;height:547px;z-index:21">
<div class="a" style="left:183px;top:256px;width:118px;height:23px;background:#ebebeb"></div>
<div class="a" style="left:158px;top:481px;width:143px;height:24px;background:#d3f0e0"></div>
<div class="mi" style="top:214px;color:#444;">Cu<span class="u">t</span></div>
<div class="mi" style="top:238px;color:#444;"><span class="u">C</span>opy</div>
<div class="mi" style="top:262px;color:#666;font-weight:bold;"><span style="font-size:11.5px">Paste Options:</span></div>
<div class="mi" style="top:315px;color:#a6a6a6;"><span style="letter-spacing:-0.25px">Paste <span class="u">S</span>pecial...</span></div>
<div class="mi" style="top:341px;color:#444;"><span class="u">I</span>nsert</div>
<div class="mi" style="top:365px;color:#444;"><span class="u">D</span>elete</div>
<div class="mi" style="top:389px;color:#444;">Clear Co<span class="u">n</span>tents</div>
<div class="mi" style="top:415px;color:#444;"><span class="u">F</span>ormat Cells...</div>
<div class="mi" style="top:439px;color:#444;"><span class="u">C</span>olumn Width...</div>
<div class="mi" style="top:463px;color:#444;"><span class="u">H</span>ide</div>
<div class="mi" style="top:487px;color:#444;"><span class="u">U</span>nhide</div>
<div class="a" style="left:190px;top:333px;width:110px;height:1px;background:#e1e1e1"></div>
<div class="a" style="left:190px;top:407px;width:110px;height:1px;background:#e1e1e1"></div>
<svg class="a" style="left:164px;top:212px" width="15" height="16" viewBox="0 0 15 16">
<path d="M2.6 0.5L9.6 10.3M11.8 0.5L4.8 10.3" stroke="#555" stroke-width="1.7"/>
<circle cx="3.3" cy="12" r="2.7" fill="#fff" stroke="#4a7cbf" stroke-width="1.1"/>
<circle cx="11.1" cy="12" r="2.7" fill="#fff" stroke="#4a7cbf" stroke-width="1.1"/>
</svg>
<svg class="a" style="left:163px;top:237px" width="16" height="14" viewBox="0 0 16 14">
<path d="M0.5 0.5H6L8 2.5V10.5H0.5Z" fill="#fff" stroke="#444"/>
<path d="M6.5 4.5H12.5L15.5 7.5V13.5H6.5Z" fill="#fff" stroke="#444"/>
<path d="M2 3.5H5M2 5.5H5M2 7.5H5M8.5 8.5H13.5M8.5 10.5H13.5" stroke="#4a7cbf" stroke-width="1"/>
</svg>
<svg class="a" style="left:164px;top:259px" width="15.5" height="16.0" viewBox="0 0 31 32">
<rect x="1" y="4" width="24" height="25" fill="#d6d6d6"/>
<rect x="6" y="4" width="13.5" height="4.5" fill="#b0b0b0"/>
<circle cx="13" cy="3" r="3" fill="#b0b0b0"/>
<circle cx="13" cy="3.5" r="1.2" fill="#fff"/>
<path d="M15.5 12.5H25L29.5 17V30.5H15.5Z" fill="#f5f2f5" stroke="#b4b4b4" stroke-width="2.00"/>
<path d="M25 12.5V17H29.5" fill="none" stroke="#b4b4b4" stroke-width="2.00"/>
</svg>
<svg class="a" style="left:189px;top:283px" width="22.3" height="23.0" viewBox="0 0 31 32">
<rect x="1" y="4" width="24" height="25" fill="#d6d6d6"/>
<rect x="6" y="4" width="13.5" height="4.5" fill="#b0b0b0"/>
<circle cx="13" cy="3" r="3" fill="#b0b0b0"/>
<circle cx="13" cy="3.5" r="1.2" fill="#fff"/>
<path d="M15.5 12.5H25L29.5 17V30.5H15.5Z" fill="#f5f2f5" stroke="#b4b4b4" stroke-width="1.39"/>
<path d="M25 12.5V17H29.5" fill="none" stroke="#b4b4b4" stroke-width="1.39"/>
</svg>
<svg class="a" style="left:164px;top:413px" width="15" height="16" viewBox="0 0 15 16">
<path d="M0.5 0.5H13.5V15.5H0.5Z" fill="#fff" stroke="#555"/>
<rect x="0" y="0" width="14" height="2.5" fill="#4a7cbf"/>
<circle cx="4.5" cy="6.5" r="1.4" fill="#777"/>
<circle cx="4.5" cy="11.5" r="1.1" fill="none" stroke="#555" stroke-width="0.9"/>
<path d="M7 6.5H11M7 11.5H11" stroke="#555"/>
</svg>
<svg class="a" style="left:250px;top:488px" width="14" height="21" viewBox="0 0 14 21">
<path d="M0.5 0.5V16.5L4.5 12.8L7.5 19.5L10 18.5L7 12H12.5Z" fill="#fff" stroke="#000" stroke-width="1"/>
</svg>
</div>
</body></html>
